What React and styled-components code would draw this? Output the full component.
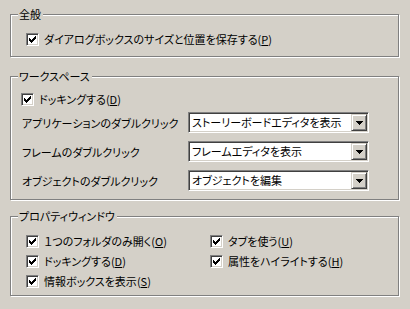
import React from 'react'
import styled, { createGlobalStyle } from 'styled-components'

const GlobalStyle = createGlobalStyle`
  html, body {
    margin: 0;
    padding: 0;
    background: #d4d0c8;
  }
  body {
    font-family: "Noto Sans CJK JP", "Noto Sans", sans-serif;
    font-size: 11px;
    font-feature-settings: "palt";
    color: #000;
  }
`

const Page = styled.div`
  width: 410px;
  height: 309px;
  box-sizing: border-box;
  padding: 14px 11px 0 10px;
  overflow: hidden;
`

const Group = styled.div`
  position: relative;
  border: 1px solid #808080;
  box-shadow: 1px 1px 0 #fff, inset 1px 1px 0 #fff;
  margin-top: ${p => p.gap || 0}px;
  padding: ${p => p.pad};
`

const Legend = styled.span`
  position: absolute;
  left: 7px;
  top: -8px;
  padding: 0 2px 0 1px;
  background: #d4d0c8;
  line-height: 15px;
`

const CheckRow = styled.label`
  display: flex;
  align-items: center;
  gap: 5px;
  height: 13px;
  line-height: 13px;
  white-space: nowrap;
`

const Box = styled.span`
  box-sizing: border-box;
  width: 13px;
  height: 13px;
  flex: none;
  background: #fff;
  border-top: 1px solid #808080;
  border-left: 1px solid #808080;
  border-right: 1px solid #fff;
  border-bottom: 1px solid #fff;
  box-shadow: inset 1px 1px 0 #404040, inset -1px -1px 0 #d4d0c8;
  display: flex;
  align-items: center;
  justify-content: center;
`

const Check = () => (
  <Box>
    <svg width="7" height="7" viewBox="0 0 7 7" shapeRendering="crispEdges">
      <path d="M0 2h1v3H0zM1 3h1v3H1zM2 4h1v3H2zM3 3h1v3H3zM4 2h1v3H4zM5 1h1v3H5zM6 0h1v3H6z" fill="#000" />
    </svg>
  </Box>
)

const Stack = styled.div`
  display: flex;
  flex-direction: column;
  gap: ${p => p.gap}px;
`

const Columns = styled.div`
  display: grid;
  grid-template-columns: 184px 1fr;
  align-items: start;
`

const FieldRow = styled.div`
  display: flex;
  align-items: center;
  height: 21px;
`

const FieldLabel = styled.span`
  width: 166px;
  flex: none;
  white-space: nowrap;
  padding-left: 1px;
`

const Combo = styled.div`
  box-sizing: border-box;
  width: 181px;
  height: 21px;
  display: flex;
  align-items: stretch;
  background: #fff;
  border-top: 1px solid #808080;
  border-left: 1px solid #808080;
  border-right: 1px solid #fff;
  border-bottom: 1px solid #fff;
  box-shadow: inset 1px 1px 0 #404040, inset -1px -1px 0 #d4d0c8;
  padding: 1px;
`

const ComboText = styled.span`
  flex: 1;
  padding-left: 2px;
  line-height: 17px;
  white-space: nowrap;
  overflow: hidden;
`

const ComboButton = styled.span`
  box-sizing: border-box;
  width: 16px;
  flex: none;
  background: #d4d0c8;
  border-top: 1px solid #d4d0c8;
  border-left: 1px solid #d4d0c8;
  border-right: 1px solid #404040;
  border-bottom: 1px solid #404040;
  box-shadow: inset 1px 1px 0 #fff, inset -1px -1px 0 #808080;
  display: flex;
  align-items: center;
  justify-content: center;
`

const Arrow = () => (
  <svg width="7" height="4" viewBox="0 0 7 4" shapeRendering="crispEdges">
    <path d="M0 0h7v1H0zM1 1h5v1H1zM2 2h3v1H2zM3 3h1v1H3z" fill="#000" />
  </svg>
)

const Dropdown = ({ value }) => (
  <Combo>
    <ComboText>{value}</ComboText>
    <ComboButton>
      <Arrow />
    </ComboButton>
  </Combo>
)

const Option = ({ children, hot }) => (
  <CheckRow>
    <Check />
    <span>
      {children}(<u>{hot}</u>)
    </span>
  </CheckRow>
)

const fields = [
  ['アプリケーションのダブルクリック', 'ストーリーボードエディタを表示'],
  ['フレームのダブルクリック', 'フレームエディタを表示'],
  ['オブジェクトのダブルクリック', 'オブジェクトを編集'],
]

export default function App() {
  return (
    <Page>
      <GlobalStyle />
      <Group pad="18px 10px 10px 15px">
        <Legend>全般</Legend>
        <Option hot="P">ダイアログボックスのサイズと位置を保存する</Option>
      </Group>

      <Group gap={19} pad="16px 10px 8px 10px">
        <Legend>ワークスペース</Legend>
        <Option hot="D">ドッキングする</Option>
        <Stack gap={8} style={{ marginTop: 6 }}>
          {fields.map(([label, value]) => (
            <FieldRow key={label}>
              <FieldLabel>{label}</FieldLabel>
              <Dropdown value={value} />
            </FieldRow>
          ))}
        </Stack>
      </Group>

      <Group gap={16} pad="18px 10px 7px 15px">
        <Legend>プロパティウィンドウ</Legend>
        <Columns>
          <Stack gap={7}>
            <Option hot="O">１つのフォルダのみ開く</Option>
            <Option hot="D">ドッキングする</Option>
            <Option hot="S">情報ボックスを表示</Option>
          </Stack>
          <Stack gap={7}>
            <Option hot="U">タブを使う</Option>
            <Option hot="H">属性をハイライトする</Option>
          </Stack>
        </Columns>
      </Group>
    </Page>
  )
}
